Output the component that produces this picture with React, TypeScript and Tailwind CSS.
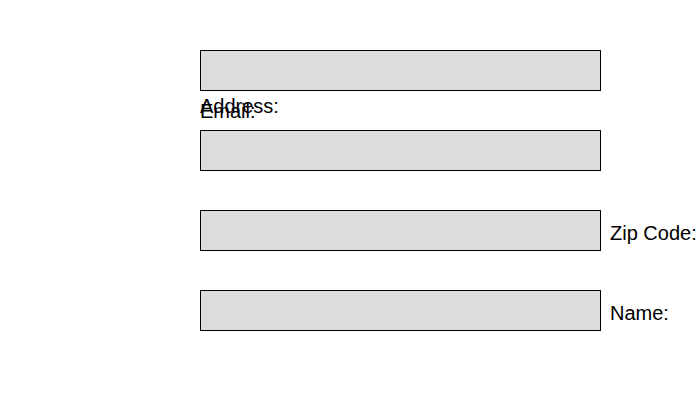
export default function App() {
  const font = { fontFamily: '"Liberation Sans", Arial, sans-serif' };
  const box = "w-[401px] h-[41px] border border-black bg-[#dcdcdc]";

  return (
    <div
      className="w-[700px] h-[400px] bg-white text-black text-[20px] leading-[23px] pt-[50px] pl-[200px]"
      style={font}
    >
      <div className="flex flex-col">
        <div className={box} />
        <div className="grid h-[39px]">
          <span className="[grid-area:1/1] mt-[4px]">Address:</span>
          <span className="[grid-area:1/1] mt-[9px]">Email:</span>
        </div>
        <div className={box} />
        <div className="flex items-start gap-[9px] mt-[39px]">
          <div className={box} />
          <span className="mt-[12px] whitespace-nowrap">Zip Code:</span>
        </div>
        <div className="flex items-start gap-[9px] mt-[39px]">
          <div className={box} />
          <span className="mt-[12px] whitespace-nowrap">Name:</span>
        </div>
      </div>
    </div>
  );
}
